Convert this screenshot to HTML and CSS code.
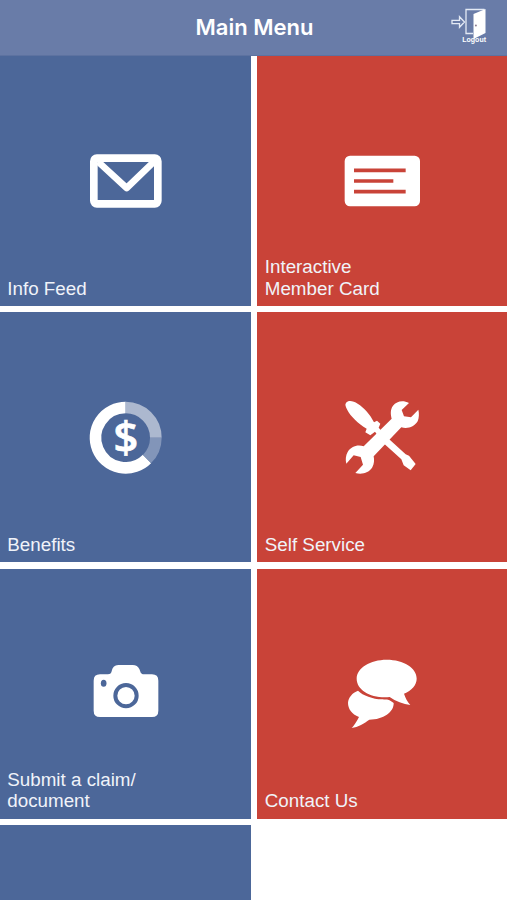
FILE: index.html
```html
<!DOCTYPE html>
<html lang="en">
<head>
  <meta charset="UTF-8">
  <meta name="viewport" content="width=device-width, initial-scale=1.0">
  <title>Main Menu</title>
  <link rel="stylesheet" href="styles.css">
</head>
<body>
  <header>
    <h1>Main Menu</h1>
    <a href="#" class="logout">
      <svg viewBox="0 0 36 32" aria-hidden="true">
        <path class="line" d="M1 12.3h7.5V8.7l5 5.3-5 5.3v-3.6H1z"/>
        <path class="line" d="M22 25.5h-7V1.5h18.5"/>
        <path d="M22.5 6 34.5 1v24L22.5 31z"/>
        <circle class="knob" cx="24.9" cy="17.5" r="1"/>
      </svg>
      <span>Logout</span>
    </a>
  </header>
  <main class="menu">
    <a href="#" class="tile blue">
      <svg viewBox="15 -12 240 240">
        <rect class="stroke" x="41.5" y="39.5" width="192" height="137" rx="9" stroke-width="23"/>
        <path class="stroke" d="M54 50 140 129 222 50" stroke-width="20"/>
      </svg>
      <span>Info Feed</span>
    </a>
    <a href="#" class="tile red">
      <svg viewBox="21 -12 240 240">
        <rect x="29" y="32" width="226" height="152" rx="16"/>
        <path class="cut" d="M57 76h155M57 108h118M57 140h155" stroke-width="11"/>
      </svg>
      <span>Interactive<br>Member Card</span>
    </a>
    <a href="#" class="tile blue">
      <svg viewBox="15 15 240 240">
        <g class="ring">
          <path d="M137 46.5A90.5 90.5 0 1 0 201 201"/>
          <path class="light" d="M137 46.5A90.5 90.5 0 0 1 227.5 137"/>
          <path class="mid" d="M227.5 137A90.5 90.5 0 0 1 201 201"/>
        </g>
        <text x="138" y="184" text-anchor="middle">$</text>
      </svg>
      <span>Benefits</span>
    </a>
    <a href="#" class="tile red">
      <svg viewBox="21 15 240 240">
        <!-- screwdriver -->
        <path d="M33 33C40 23 55 27 68 35 87 47 105 66 117 91L126 86 136 95 131 107 156 136 212 187 222 191 242 216 227 235 206 220 199 202 145 153 120 119 106 130 91 121 95 110C69 95 47 73 37 54 32 44 29 38 33 33Z"/>
        <!-- wrench -->
        <path d="M222 33C204 23 185 27 174 41 165 53 167 68 170 80L86 163C69 156 47 163 38 180 32 191 31 204 34 215L56 190 77 195 84 218 61 243C80 249 102 243 112 226 118 215 118 204 116 193L199 106C218 111 238 105 248 88 252 78 253 65 250 53L228 76 207 73 200 54Z"/>
      </svg>
      <span>Self Service</span>
    </a>
    <a href="#" class="tile blue">
      <svg viewBox="15 -3 240 240">
        <path d="M60 58H84C96 58 94 48 98 40 102 32 108 30 116 30H158C168 30 174 34 178 42 182 50 181 58 192 58H216Q235 58 235 77V167Q235 186 216 186H60Q41 186 41 167V77Q41 58 60 58Z"/>
        <ellipse class="hole" cx="71" cy="85" rx="8.5" ry="10.5"/>
        <circle class="cut" cx="138" cy="122" r="32" stroke-width="12"/>
      </svg>
      <span>Submit a claim/<br>document</span>
    </a>
    <a href="#" class="tile red">
      <svg viewBox="21 12 240 240">
        <path d="M69 122C84 137 113 147 141 148 154 149 160 145 176 159 177 186 145 209 103 209 88 220 69 231 50 234 58 227 67 211 72 201 50 192 39 176 39 158 40 143 52 128 69 122Z"/>
        <path d="M155 29C206 29 245 54 245 86 245 105 230 121 207 131 211 143 217 155 226 165 205 162 182 154 164 141 109 146 65 121 65 86 65 54 106 29 155 29Z"/>
      </svg>
      <span>Contact Us</span>
    </a>
    <a href="#" class="tile blue"></a>
  </main>
</body>
</html>
```

FILE: styles.css
```css
:root {
  --blue: #4c6799;
  --red: #c94338;
  --bar: #697ca8;
}
* { box-sizing: border-box; }
html, body { margin:0; padding:0; height:100%; }
body {
  font-family: "Liberation Sans", Arial, sans-serif;
  background:#fff; color:#fff;
  display:flex; flex-direction:column;
}
a { color:inherit; text-decoration:none; }
/* Header */
header {
  flex:none; height:56px; padding:0 20px;
  display:grid; grid-template-columns:1fr auto 1fr; align-items:center;
  background:var(--bar); border-bottom:1px solid #5d72a0;
}
h1 { grid-column:2; margin:0; padding:0 0 1px 2px; font:600 22px/28px Inter, sans-serif; }
.logout { justify-self:end; width:36px; display:flex; flex-direction:column; margin-top:-4px; }
.logout svg { width:36px; height:32px; fill:#fff; }
.logout .line { fill:none; stroke:#e4eaf5; stroke-width:1.3; }
.logout .knob { fill:#8d7f91; }
.logout span { align-self:flex-end; font-size:7px; line-height:7px; font-weight:bold; margin:-4px 1px 0 0; }
/* Tiles */
.menu {
  flex:1; min-height:0; display:grid;
  grid-template-columns:250.7px 1fr; grid-template-rows:repeat(3, 250px) 1fr; gap:6.4px 6.8px;
}
.tile { position:relative; display:flex; align-items:center; justify-content:center; }
.blue { --tile:var(--blue); background:var(--tile); }
.red { --tile:var(--red); background:var(--tile); }
.tile svg { width:80px; height:80px; fill:#fff; }
.tile > span { position:absolute; left:7.3px; bottom:7px; font-size:18.8px; line-height:21.5px; color:#f0f3f9; }
/* Icons */
.stroke { fill:none; stroke:#fff; stroke-linejoin:round; }
.cut { fill:none; stroke:var(--tile); }
.hole { fill:var(--tile); }
.ring path { fill:none; stroke:#fff; stroke-width:35; }
.ring .light { stroke:#acb8cf; }
.ring .mid { stroke:#8295b9; }
.tile text { font:600 130px "Open Sans", sans-serif; stroke:#fff; stroke-width:2; }
```
